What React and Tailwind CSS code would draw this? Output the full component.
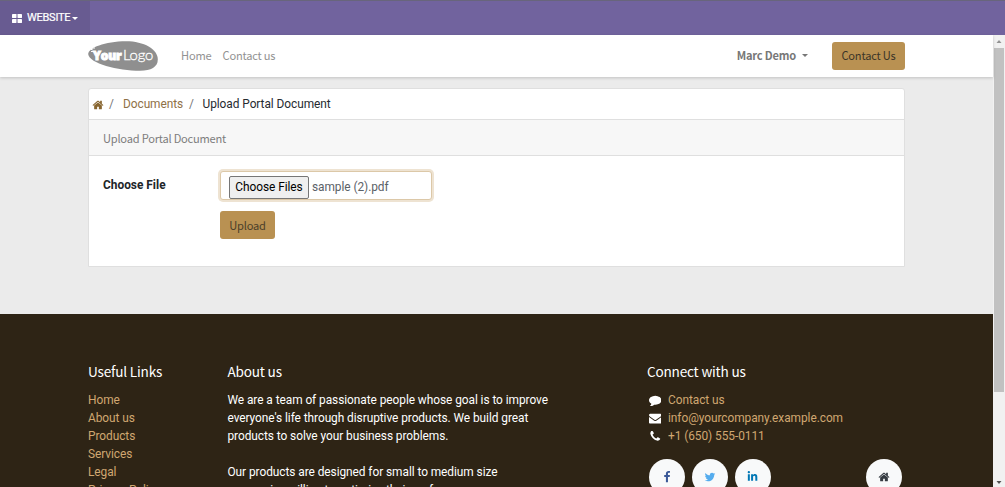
import React from 'react';
import { FaLinkedinIn } from 'react-icons/fa';

const HEAD = "font-['Noto_Sans_CJK_SC',sans-serif]";

const paths = {
  home: 'M1472 992v480q0 26-19 45t-45 19h-384v-384h-256v384h-384q-26 0-45-19t-19-45v-480q0-1 .5-3t.5-3l575-474 575 474q1 2 1 6zm223-69l-62 74q-8 9-21 11h-3q-13 0-21-7l-692-577-692 577q-12 8-24 7-13-2-21-11l-62-74q-8-10-7-23.5t11-21.5l719-599q32-26 76-26t76 26l244 204v-195q0-14 9-23t23-9h192q14 0 23 9t9 23v408l219 182q10 8 11 21.5t-7 23.5z',
  comment: 'M1792 896q0 174-120 321.5t-326 233-450 85.5q-70 0-145-8-198 175-460 242-49 14-114 22-17 2-30.5-9t-17.5-29v-1q-3-4-.5-12t2-10 4.5-9.5l6-9 7-8.5 8-9q7-8 31-34.5t34.5-38 31-39.5 32.5-51 27-59 26-76q-157-89-247.5-220t-90.5-281q0-130 71-248.5t191-204.5 286-136.5 348-50.5 348 50.5 286 136.5 191 204.5 71 248.5z',
  envelope: 'M1792 710v794q0 66-47 113t-113 47h-1472q-66 0-113-47t-47-113v-794q44 49 101 87 362 246 497 345 57 42 92.5 65.5t94.5 48 110 24.5h2q51 0 110-24.5t94.5-48 92.5-65.5q170-123 498-345 57-39 100-87zm0-294q0 79-49 151t-122 123q-376 261-468 325-10 7-42.5 31t-54 38.5-52 32.5-57.5 27-50 9h-2q-23 0-50-9t-57.5-27-52-32.5-54-38.5-42.5-31q-91-64-262-182.5t-205-142.5q-62-42-117-115.5t-55-136.5q0-78 41.5-130t118.5-52h1472q65 0 112.5 47t47.5 113z',
  phone: 'M1600 1240q0 27-10 70.5t-21 68.5q-21 50-122 106-94 51-186 51-27 0-53-3.5t-57.5-12.5-47-14.5-55.5-20.5-49-18q-98-35-175-83-127-79-264-216t-216-264q-48-77-83-175-3-9-18-49t-20.5-55.5-14.5-47-12.5-57.5-3.5-53q0-92 51-186 56-101 106-122 25-11 68.5-21t70.5-10q14 0 21 3 18 6 53 76 11 19 30 54t35 63.5 31 53.5q3 4 17.5 25t21.5 35.5 7 28.5q0 20-28.5 50t-62 55-62 53-28.5 46q0 9 5 22.5t8.5 20.5 14 24 11.5 19q76 137 174 235t235 174q2 1 19 11.5t24 14 20.5 8.5 22.5 5q18 0 46-28.5t53-62 55-62 50-28.5q14 0 28.5 7t35.5 21.5 25 17.5q25 15 53.5 31t63.5 35 54 30q70 35 76 53 3 7 3 21z',
  facebook: 'M1343 12v264h-157q-86 0-116 36t-30 108v189h293l-39 296h-254v759h-306v-759h-255v-296h255v-218q0-186 104-288.5t277-102.5q147 0 228 12z',
  twitter: 'M1684 408q-67 98-162 167 1 14 1 42 0 130-38 259.5t-115.5 248.5-184.5 210.5-258 146-323 54.5q-271 0-496-145 35 4 78 4 225 0 401-138-105-2-188-64.5t-114-159.5q33 5 61 5 43 0 85-11-112-23-185.5-111.5t-73.5-205.5v-4q68 38 146 41-66-44-105-115t-39-154q0-88 44-163 121 149 294.5 238.5t371.5 99.5q-8-38-8-74 0-134 94.5-228.5t228.5-94.5q140 0 236 102 109-21 205-78-37 115-142 178 93-10 186-50z',
};

function Icon({ name, className }) {
  return (
    <svg viewBox="0 0 1792 1792" fill="currentColor" className={`shrink-0 ${className}`}>
      <path d={paths[name]} />
    </svg>
  );
}

function Logo() {
  return (
    <svg width="70" height="30" viewBox="0 0 70 30" className="shrink-0">
      <path d="M0.200 13C0 7 17 .2 38 .2C56 .2 69.800 8 69.800 18.500C69.800 26 63 29.800 52 29.800C30 29.800 1 22.500 .2 13Z" fill="#8f8f8f" />
      <text x="5" y="18.500" textLength="28.500" lengthAdjust="spacingAndGlyphs" fill="#fff" stroke="#fff" strokeWidth="1" fontFamily="Open Sans, sans-serif" fontWeight="800" fontSize="13">Your</text>
      <text x="35" y="18.800" textLength="30" lengthAdjust="spacingAndGlyphs" fill="#fff" stroke="#fff" strokeWidth=".3" fontFamily="Lato, sans-serif" fontWeight="300" fontSize="14.500">Logo</text>
      <path d="M2.500 8.500h2M4 7h3M3 10.500h3" stroke="#fff" strokeWidth="1" />
    </svg>
  );
}

function TopBar() {
  return (
    <div className="h-[35px] shrink-0 border-t border-[#68657c] bg-[#71639e]">
      <div className="flex h-[34px] w-[90px] items-center bg-[#685b91] pl-[11.500px] text-[11px] text-white">
        <svg width="10" height="9" viewBox="0 0 10 9" fill="currentColor">
          <rect width="4.500" height="4" rx=".4" /><rect x="5.500" width="4.500" height="4" rx=".4" />
          <rect y="5" width="4.500" height="4" rx=".4" /><rect x="5.500" y="5" width="4.500" height="4" rx=".4" />
        </svg>
        <span className="ml-[5.500px] w-[43px] text-[11px] whitespace-nowrap tracking-[-0.250px] [-webkit-text-stroke:0.2px_white]">WEBSITE</span>
        <svg width="6" height="3" viewBox="0 0 6 3" fill="currentColor" className="ml-[2px]"><path d="M0 0h6L3 3z" /></svg>
      </div>
    </div>
  );
}

function NavBar() {
  return (
    <header className={`z-10 flex h-[41.500px] shrink-0 items-center bg-white pr-[87.500px] pl-[88px] text-[11.100px] tracking-[-0.200px] shadow-[0_1px_3px_rgba(0,0,0,0.18)] ${HEAD}`}>
      <Logo />
      <span className="ml-[23px] w-[41.500px] pt-px whitespace-nowrap text-[#929292]">Home</span>
      <span className="pt-px whitespace-nowrap text-[#929292]">Contact us</span>
      <span className="ml-auto pt-px font-bold whitespace-nowrap text-[#777]">Marc Demo</span>
      <svg width="6" height="3" viewBox="0 0 6 3" className="ml-[6px] fill-[#777]"><path d="M0 0h6L3 3z" /></svg>
      <button className="ml-6 h-[28px] w-[73px] rounded-[3px] bg-[#b99152] pt-px whitespace-nowrap text-[#3b3528]">Contact Us</button>
    </header>
  );
}

function UploadCard() {
  return (
    <section className="ml-[88px] flex h-[179px] w-[817px] flex-col rounded-t-[3px] border border-[#dfdfdf] bg-white">
      <nav className="flex h-[30px] items-center pt-px pl-[3px]">
        <Icon name="home" className="size-[12px] text-[#87652f]" />
        <span className="ml-[5px] w-[14px] text-[#777]">/</span>
        <span className="w-[66px] text-[#8f7147]">Documents</span>
        <span className="w-[13.500px] text-[#777]">/</span>
        <span className="text-[#262b30]">Upload Portal Document</span>
      </nav>
      <div className={`flex h-[37px] shrink-0 items-center border-y border-[#dfdfdf] bg-[#f7f7f7] pt-[3px] pl-[14px] text-[11.100px] tracking-[-0.220px] text-[#7d7d7d] ${HEAD}`}>
        Upload Portal Document
      </div>
      <div className="flex pl-[14px]">
        <label className="w-[117px] pt-[21px] font-bold tracking-normal text-[#212529]">Choose File</label>
        <div className="pt-[15px]">
          <div className="flex h-[29px] w-[212px] items-start rounded-[3px] border border-[#dcc8a8] bg-white pt-[4px] pl-[8px] shadow-[0_0_0_2px_#eee3d2]">
            <button className="h-[23px] w-[80px] rounded-[2px] border border-[#767676] bg-[#efefef] whitespace-nowrap text-black">Choose Files</button>
            <span className="ml-[3px] pt-[3px] text-[#5b6167]">sample (2).pdf</span>
          </div>
          <button className={`mt-[11px] h-[28px] w-[55px] rounded-[3px] bg-[#b99152] pt-px text-[11.100px] tracking-[-0.200px] text-[#4b3f2a] ${HEAD}`}>Upload</button>
        </div>
      </div>
    </section>
  );
}

function FooterTitle({ children }) {
  return <h5 className={`mb-[11.300px] h-[20px] text-[13.600px] leading-[20px] tracking-[-0.200px] whitespace-nowrap text-white ${HEAD}`}>{children}</h5>;
}

function Social({ children, className }) {
  return <span className={`flex size-[36px] items-center justify-center rounded-full bg-[#f8f9fa] ${className}`}>{children}</span>;
}

function Footer() {
  return (
    <footer className="flex min-h-0 flex-1 overflow-hidden bg-[#2e2415] pt-[47px] pl-[88px] leading-[17.85px] text-[#d0a771]">
      <div className="w-[139.500px] shrink-0">
        <FooterTitle>Useful Links</FooterTitle>
        <ul>
          {['Home', 'About us', 'Products', 'Services', 'Legal', 'Privacy Policy'].map((t) => <li key={t}>{t}</li>)}
        </ul>
      </div>
      <div className="w-[419.500px] shrink-0 whitespace-nowrap text-white">
        <FooterTitle>About us</FooterTitle>
        <p>We are a team of passionate people whose goal is to improve<br />everyone's life through disruptive products. We build great<br />products to solve your business problems.</p>
        <p className="mt-[17.85px]">Our products are designed for small to medium size<br />companies willing to optimize their performance.</p>
      </div>
      <div className="w-[256px] shrink-0">
        <FooterTitle>Connect with us</FooterTitle>
        <ul>
          <li className="flex items-center"><Icon name="comment" className="mb-[2px] ml-[1.500px] size-[12.500px] text-white" /><span className="ml-[7px]">Contact us</span></li>
          <li className="flex items-center"><Icon name="envelope" className="mb-[2px] ml-[1.500px] size-[12.500px] text-white" /><span className="ml-[7px]">info@yourcompany.example.com</span></li>
          <li className="flex items-center"><Icon name="phone" className="mb-[2px] ml-[1.500px] size-[12.500px] text-white" /><span className="ml-[7px]">+1 (650) 555-0111</span></li>
        </ul>
        <div className="mt-[13px] ml-[2.200px] flex gap-[6.800px]">
          <Social><Icon name="facebook" className="size-[12px] text-[#3b5998]" /></Social>
          <Social><Icon name="twitter" className="size-[12px] text-[#55acee]" /></Social>
          <Social><FaLinkedinIn className="size-[11px] text-[#0077b5]" /></Social>
          <Social className="mr-[0.800px] ml-auto"><Icon name="home" className="size-[12px] text-[#343a40]" /></Social>
        </div>
      </div>
    </footer>
  );
}

function ScrollBar() {
  return (
    <div className="flex w-[12.500px] shrink-0 flex-col items-center bg-[#f1f1f1]">
      <svg width="12" height="13" viewBox="0 0 12 13" className="shrink-0 fill-[#929292]"><path d="M3.500 8h5L6 5z" /></svg>
      <div className="h-[344px] w-[10px] shrink-0 bg-[#c1c1c1]" />
      <svg width="12" height="12" viewBox="0 0 12 12" className="mt-auto shrink-0 fill-[#505050]"><path d="M3.500 6h5L6 9z" /></svg>
    </div>
  );
}

export default function App() {
  return (
    <div className="flex h-[487px] w-[1005px] flex-col overflow-hidden bg-[#ebebeb] font-['Roboto',sans-serif] text-[11.9px] leading-[17.85px] tracking-[-0.060px]">
      <TopBar />
      <div className="flex min-h-0 flex-1">
        <div className="flex w-[992.500px] shrink-0 flex-col">
          <NavBar />
          <main className="h-[237.500px] shrink-0 pt-[11.500px]"><UploadCard /></main>
          <Footer />
        </div>
        <ScrollBar />
      </div>
    </div>
  );
}
